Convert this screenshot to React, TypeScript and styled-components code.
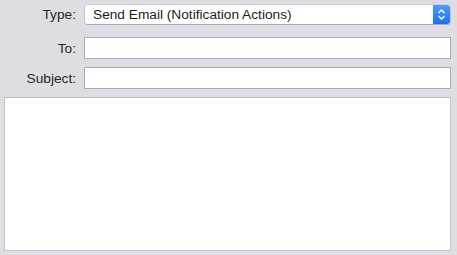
import React from "react";
import styled, { createGlobalStyle } from "styled-components";

const Global = createGlobalStyle`
  html, body { margin: 0; padding: 0; background: #dedde3; }
  body { font-family: "Liberation Sans", Arial, sans-serif; font-size: 13.7px; color: #1e1e1e; }
  * { box-sizing: border-box; }
`;

const Form = styled.div`
  display: flex;
  flex-direction: column;
  padding: 4px 6px 0 4px;
  width: 457px;
  height: 255px;
`;

const Row = styled.div<{ $top?: number; $h: number }>`
  display: grid;
  grid-template-columns: 72px 1fr;
  column-gap: 8px;
  height: ${(p) => p.$h}px;
  margin-top: ${(p) => p.$top ?? 0}px;
`;

const Label = styled.label`
  display: flex;
  align-items: center;
  justify-content: flex-end;
  font-size: 13.7px;
  color: #262626;
`;

const Select = styled.div`
  display: flex;
  align-items: stretch;
  background: #fff;
  border-radius: 4px;
  border: 1px solid #c4c3c8;
  border-top-color: #cfced3;
  border-bottom-color: #adacb1;
  overflow: hidden;
`;

const SelectText = styled.span`
  flex: 1;
  display: flex;
  align-items: center;
  padding-left: 8px;
  font-size: 13.7px;
  color: #1c1c1c;
`;

const Stepper = styled.span`
  width: 17px;
  display: flex;
  align-items: center;
  justify-content: center;
  background: linear-gradient(#4a9cff, #1b6ff8);
`;

const Field = styled.input`
  height: 22px;
  border: 1px solid #acabb0;
  background: #fff;
  margin: 0;
  outline: none;
  font: inherit;
`;

const Body = styled.textarea`
  height: 154px;
  margin: 8px 0 0;
  border: 1px solid #c4c4c6;
  border-top-color: #bcbcbe;
  background: #fff;
  resize: none;
  outline: none;
  font: inherit;
`;

export default function App() {
  return (
    <>
      <Global />
      <Form>
        <Row $h={21}>
          <Label>Type:</Label>
          <Select>
            <SelectText>Send Email (Notification Actions)</SelectText>
            <Stepper>
              <svg width="9" height="13" viewBox="0 0 9 13" fill="none">
                <path d="M1.5 5 L4.5 2 L7.5 5" stroke="#fff" strokeWidth="1.4" />
                <path d="M1.5 8 L4.5 11 L7.5 8" stroke="#fff" strokeWidth="1.4" />
              </svg>
            </Stepper>
          </Select>
        </Row>
        <Row $h={22} $top={12}>
          <Label>To:</Label>
          <Field />
        </Row>
        <Row $h={22} $top={8}>
          <Label>Subject:</Label>
          <Field />
        </Row>
        <Body />
      </Form>
    </>
  );
}
